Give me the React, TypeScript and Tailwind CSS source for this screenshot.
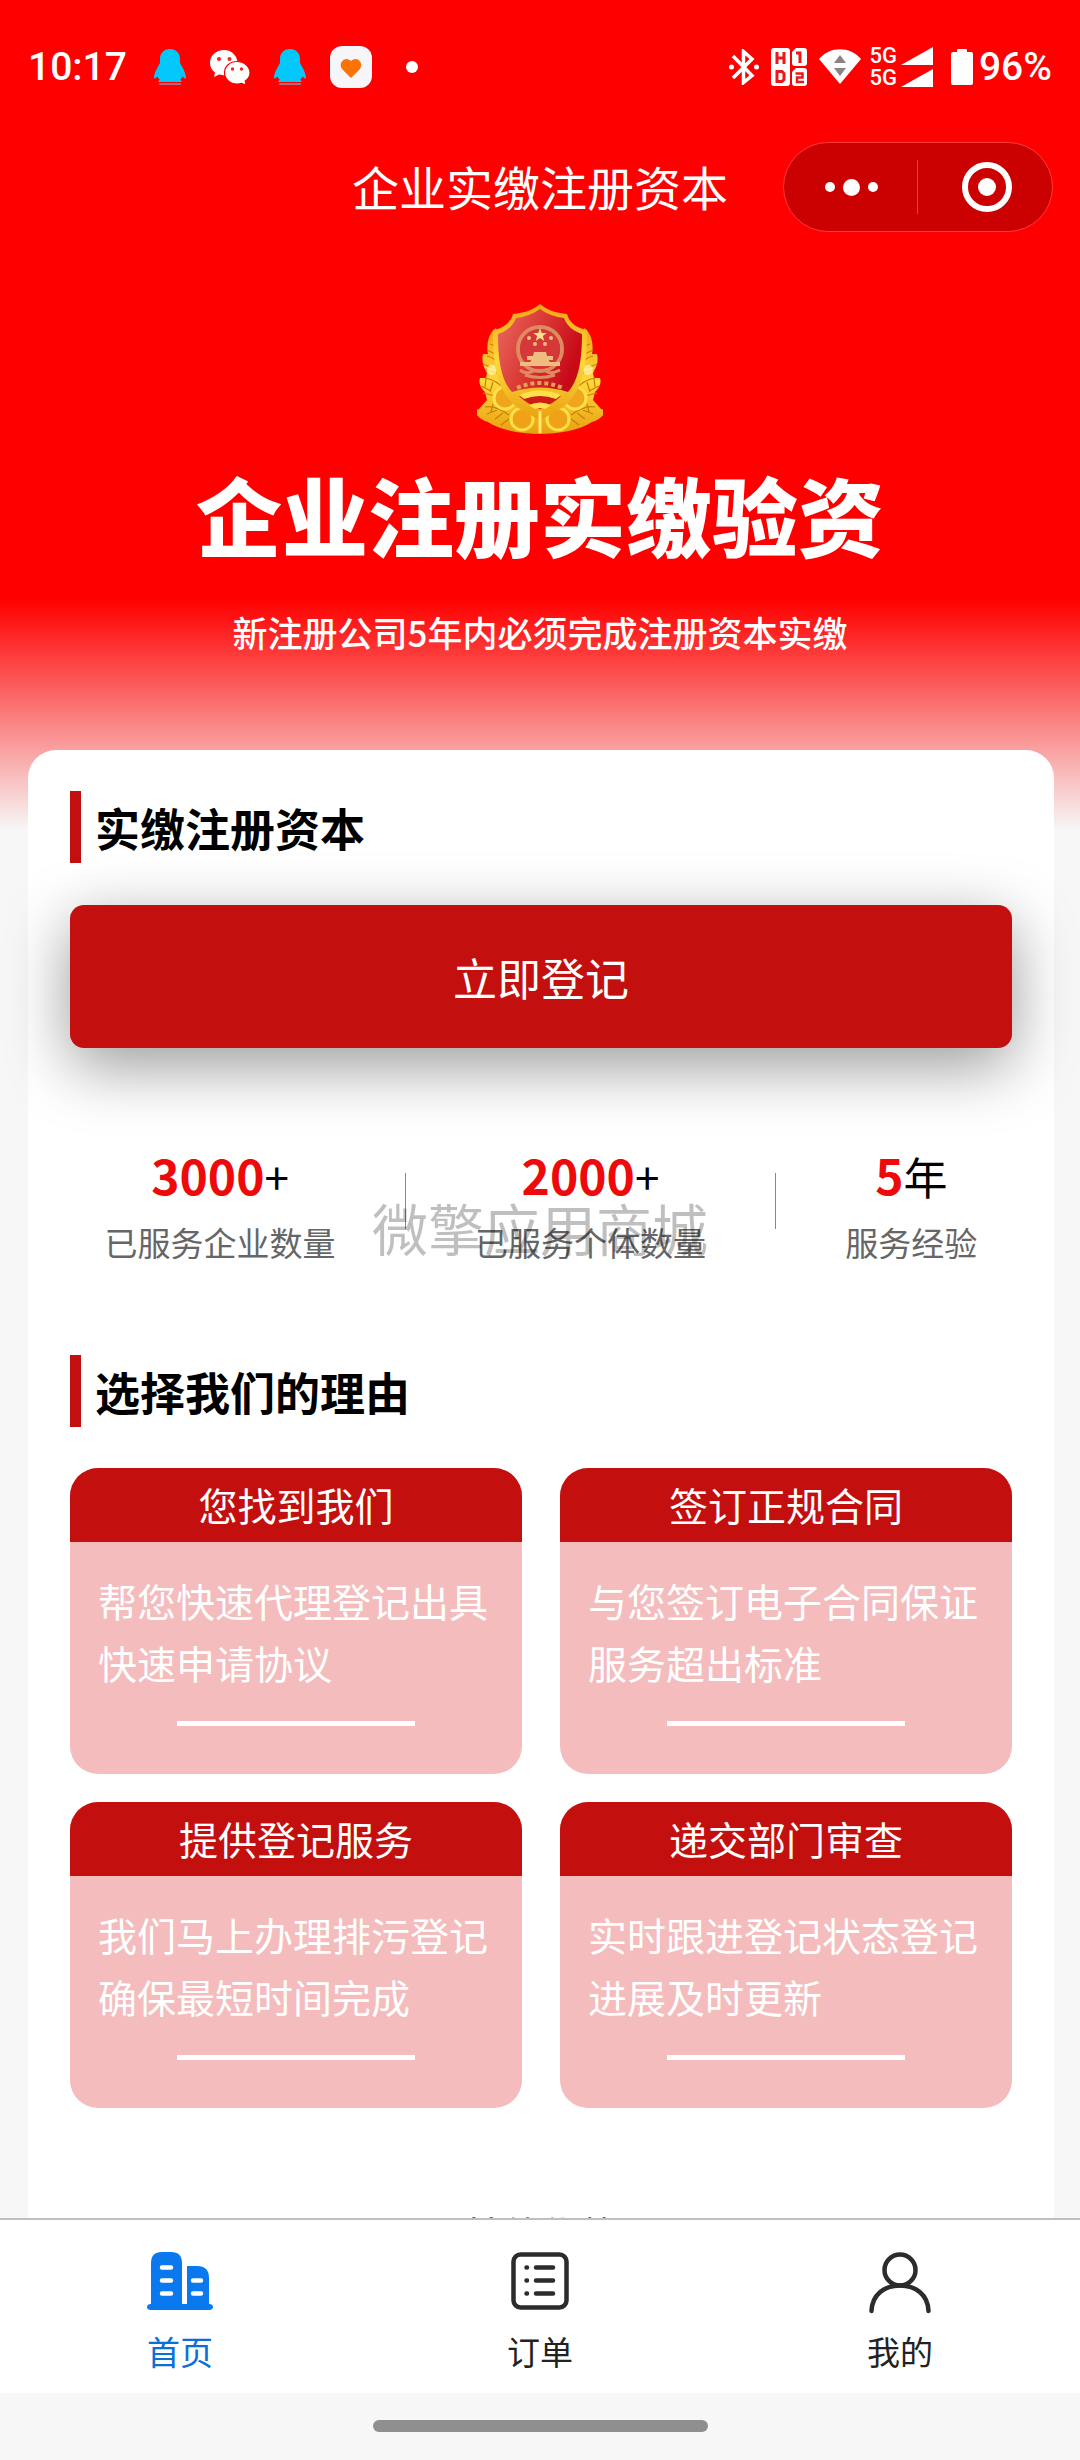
import type { ReactNode } from "react";

const stats = [
  { value: "3000", unit: "+", label: "已服务企业数量" },
  { value: "2000", unit: "+", label: "已服务个体数量" },
  { value: "5", unit: "年", label: "服务经验" },
];

const reasons = [
  { title: "您找到我们", lines: ["帮您快速代理登记出具", "快速申请协议"] },
  { title: "签订正规合同", lines: ["与您签订电子合同保证", "服务超出标准"] },
  { title: "提供登记服务", lines: ["我们马上办理排污登记", "确保最短时间完成"] },
  { title: "递交部门审查", lines: ["实时跟进登记状态登记", "进展及时更新"] },
];

function QQIcon() {
  return (
    <svg width="32" height="36" viewBox="0 0 32 36" fill="#04c8fb">
      <path d="M16 0C9.500 0 6 4.500 6 10v4C3 19 0 25 0 28.500c0 2 1.500 1 3.500-1C4 29 5 30 6 31c-1.500.5-2 1.300-2 2h24c0-.7-.5-1.500-2-2 1-1 2-2 2.500-3.500 2 2 3.500 3 3.500 1C32 25 29 19 26 14v-4C26 4.500 22.500 0 16 0z" />
      <path d="M5 34h22v2H5z" fill="#b06a80" />
    </svg>
  );
}

function WeChatIcon() {
  return (
    <svg width="40" height="34" viewBox="0 0 40 34">
      <path d="M14 0C6 0 0 5.500 0 13c0 4 2 7.500 5 9.500L4 27l5-2.500c2 .6 3.500.8 5 .8 8 0 13.500-5.500 13.500-12.300S22 0 14 0z" fill="#fff" />
      <circle cx="9" cy="9" r="2" fill="#f22" />
      <circle cx="19.500" cy="9" r="2" fill="#f22" />
      <path d="M27 11.500c-7.200 0-12.500 5-12.500 11.200S20 34 27 34c1.500 0 3-.2 4.500-.6L36 35l-.8-4c3-2 4.800-5 4.800-8.300 0-6.200-5.800-11.200-13-11.200z" fill="#fff" stroke="#f00" strokeWidth="1.200" />
      <circle cx="22.500" cy="19" r="1.700" fill="#f22" />
      <circle cx="31.500" cy="19" r="1.700" fill="#f22" />
    </svg>
  );
}

function HealthIcon() {
  return (
    <svg width="42" height="42" viewBox="0 0 42 42">
      <rect width="42" height="42" rx="12" fill="#f5f5fa" />
      <path d="M21 32 12.500 23.500C8.500 19 12 13 16.500 13c2 0 3.500 1 4.500 2.200C22 14 23.500 13 25.500 13c4.500 0 8 6 4 10.500z" fill="#fb7305" />
    </svg>
  );
}

function BluetoothIcon() {
  return (
    <svg width="30" height="36" viewBox="0 0 30 36" fill="none" stroke="#fff" strokeWidth="3.500">
      <path d="M4 7l19 19.500-8.500 7V2.500L23 10 4 29" />
      <circle cx="2.500" cy="18" r="2.500" fill="#fff" stroke="none" />
      <circle cx="27.500" cy="18" r="2.500" fill="#fff" stroke="none" />
    </svg>
  );
}

function SimIcon() {
  return (
    <svg width="36" height="38" viewBox="0 0 36 38" fill="#fff">
      <rect width="19" height="38" rx="3" />
      <path d="M25 0h8a3 3 0 0 1 3 3v12a3 3 0 0 1-3 3H24a3 3 0 0 1-3-3V4z" />
      <path d="M25 20h8a3 3 0 0 1 3 3v12a3 3 0 0 1-3 3H24a3 3 0 0 1-3-3V24z" />
      <g fill="none" stroke="#e8181c">
        <path d="M6 4v12M13 4v12M6 10h7" strokeWidth="3" />
        <path d="M6 23.500h5l2 2v6l-2 2H6z" strokeWidth="3" />
        <path d="M25 5h4v10" strokeWidth="3" />
        <path d="M24.500 25.500h7v4h-5.500v4.500h7" strokeWidth="2.500" />
      </g>
    </svg>
  );
}

function WifiIcon() {
  return (
    <svg width="42" height="36" viewBox="0 0 42 36">
      <path d="M0 10C11-3 31-3 42 10L21 35z" fill="#fff" />
      <path d="M15 14h12l-6-8zM15 19h12l-6 8z" fill="#8a8484" />
    </svg>
  );
}

function SignalRow() {
  return (
    <div className="flex items-center gap-1">
      <span className="text-[22px] leading-5">5G</span>
      <svg width="32" height="18" viewBox="0 0 32 18" fill="#fff">
        <path d="M0 18 32 0v18z" />
      </svg>
    </div>
  );
}

function BatteryIcon() {
  return (
    <svg width="22" height="36" viewBox="0 0 22 36" fill="#fff">
      <path d="M6 3V1q0-1 1-1h8q1 0 1 1v2h4q2 0 2 2v29q0 2-2 2H2q-2 0-2-2V5q0-2 2-2z" />
    </svg>
  );
}

function StatusBar() {
  return (
    <div className="flex h-[134px] items-center justify-between px-7 font-['Roboto',sans-serif] text-[39px] font-medium text-white">
      <div className="flex items-center">
        <span>10:17</span>
        <div className="ml-[27px] flex items-center gap-6">
          <QQIcon />
          <WeChatIcon />
          <QQIcon />
          <HealthIcon />
        </div>
        <span className="ml-[34px] h-3 w-3 rounded-full bg-white" />
      </div>
      <div className="flex items-center">
        <div className="flex items-center gap-3">
          <BluetoothIcon />
          <SimIcon />
          <WifiIcon />
        </div>
        <div className="ml-2 flex flex-col gap-[2px]">
          <SignalRow />
          <SignalRow />
        </div>
        <div className="ml-[18px] flex items-center gap-[6px]">
          <BatteryIcon />
          <span>96%</span>
        </div>
      </div>
    </div>
  );
}

function Capsule() {
  return (
    <div className="flex h-[90px] w-[270px] items-center rounded-full border border-[#ff3a3a] bg-[#cb0000] pl-[2px]">
      <button type="button" aria-label="更多" className="flex h-full flex-1 items-center justify-center gap-2">
        <span className="h-[10px] w-[10px] rounded-full bg-white" />
        <span className="h-[17px] w-[17px] rounded-full bg-white" />
        <span className="h-[10px] w-[10px] rounded-full bg-white" />
      </button>
      <span className="h-[54px] w-px bg-[#e63c3c]" />
      <button type="button" aria-label="关闭" className="flex h-full flex-1 items-center justify-center pl-1">
        <span className="flex h-[50px] w-[50px] items-center justify-center rounded-full border-[6px] border-white">
          <span className="h-[18px] w-[18px] rounded-full bg-white" />
        </span>
      </button>
    </div>
  );
}

function Emblem() {
  // One half of the wheat wreath, mirrored for the other side.
  const wreath = (
    <g>
      <path d="M17 24C10 28 7 40 9 50l-5 0c-2 8 1 14 4 19l-1 5-6 0c-2 6 2 11 5 14l2 8-8 9-5 1c2 6 8 10 14 12 12 8 32 12 54 12V96L24 70z" transform="translate(2 0)" fill="url(#gold)" />
      <g fill="none" stroke="#c8800a" strokeWidth="1.200">
        <path d="M10 52q9 2 13 10M8 74q12 2 20 12M8 103q10-2 24 8M13 40q7 2 9 9" />
        <path d="M4 82l10 5M6 89l12 3M10 110l10-4M18 115l8-6M24 121l8-6M6 60l10 4M9 66l11 3M10 46l8 4M16 78l-3 10M9 75l-1 8M16 100l-2 8" />
      </g>
      <circle cx="28" cy="94" r="11" fill="#f0a51c" stroke="#ffe04a" strokeWidth="3" />
      <circle cx="45" cy="115" r="11" fill="#efa118" stroke="#ffdf48" strokeWidth="3" />
      <circle cx="15" cy="66" r="5" fill="#fff3a8" opacity="0.8" />
    </g>
  );
  return (
    <svg width="126" height="130" viewBox="0 0 126 130" role="img" aria-label="徽章">
      <defs>
        <linearGradient id="gold" x1="0" y1="0" x2="0" y2="1">
          <stop offset="0" stopColor="#f2a51a" />
          <stop offset="0.5" stopColor="#ffd83a" />
          <stop offset="1" stopColor="#e8a010" />
        </linearGradient>
        <linearGradient id="shield" x1="0" y1="0" x2="1" y2="0.4">
          <stop offset="0" stopColor="#e86a60" />
          <stop offset="0.5" stopColor="#dc3a36" />
          <stop offset="1" stopColor="#c80a18" />
        </linearGradient>
      </defs>
      {wreath}
      <g transform="matrix(-1 0 0 1 126 0)">{wreath}</g>
      <path d="M63 0c7 6 16 9 27 10 2 8 9 14 20 16 0 36-4 58-20 74-8 7-18 10-27 17-9-7-19-10-27-17C20 84 16 62 16 26c11-2 18-8 20-16C47 9 56 6 63 0z" fill="url(#gold)" />
      <path d="M63 5c7 5 15 8 24 9 3 8 9 13 18 16 0 32-5 48-14 58-18-6-38-6-56 0C26 78 21 62 21 30c9-3 15-8 18-16 9-1 17-4 24-9z" fill="url(#shield)" />
      <path d="M42 92q21-9 42 0-8 8-21 13-13-5-21-13z" fill="#cf1c16" />
      <path d="M42 91q21-9 42 0l-5 4q-16-6-32 0zM52 101q11-5 22 0l-6 4q-5-2-10 0z" fill="#ffe14a" />
      <g transform="translate(0 3)">
        <g fill="none" stroke="#dc8c60" strokeWidth="4">
          <circle cx="63" cy="42" r="22" />
          <path d="M43 63q6 5 14 1t12 0 14-1M48 68q15 5 30 0" strokeWidth="3" />
        </g>
        <circle cx="63" cy="42" r="20" fill="#d6383a" />
        <path d="M63 21l1.800 5h5l-4 3 1.500 5-4.300-3-4.300 3 1.500-5-4-3h5z" fill="#ffe08a" />
        <g fill="#f0bd80">
          <circle cx="52" cy="31" r="2" />
          <circle cx="74" cy="31" r="2" />
          <circle cx="58" cy="37" r="2" />
          <circle cx="68" cy="37" r="2" />
          <path d="M57 45h12l1 4h6v4h-4l1 4H53l1-4h-4v-4h6zM43 55h40v4H43z" />
        </g>
      </g>
      <path d="M40 84q23-10 46 0" fill="none" stroke="#e6a052" strokeWidth="4" strokeDasharray="4 3" />
      <path d="M63 107v22" stroke="#ffe768" strokeWidth="3" />
    </svg>
  );
}

function SectionTitle({ children }: { children: ReactNode }) {
  return (
    <div className="flex h-[72px] items-center border-l-[11px] border-[#c40f0f] pl-[14px]">
      <h2 className="text-[45px] leading-none font-bold text-black">{children}</h2>
    </div>
  );
}

function HomeIcon() {
  return (
    <svg width="66" height="58" viewBox="0 0 66 58">
      <path d="M4 52V11Q4 0 15 0h9q11 0 11 11v41h5V14h10q12 0 12 12v26q4 0 4 3t-4 3H4q-4 0-4-3t4-3z" fill="#0a78ee" />
      <path d="M15 15.500h9M15 28.500h9M15 41.500h9M46 28.500h8M46 41.500h8" stroke="#fff" strokeWidth="4.500" strokeLinecap="round" />
    </svg>
  );
}

function OrderIcon() {
  return (
    <svg width="58" height="58" viewBox="0 0 58 58" fill="none" stroke="#2c2c2c" strokeWidth="4.500" strokeLinecap="round">
      <rect x="2.500" y="2.500" width="53" height="53" rx="7" />
      <path d="M25 15.500h17M25 28.500h17M25 41.500h17M15.500 15.500h.5M15.500 28.500h.5M15.500 41.500h.5" />
    </svg>
  );
}

function MineIcon() {
  return (
    <svg width="62" height="62" viewBox="0 0 62 62" fill="none" stroke="#2c2c2c" strokeWidth="4.500" strokeLinecap="round">
      <circle cx="31" cy="18" r="15.500" />
      <path d="M2.500 59C3 43 15 33.500 31 33.500S59 43 59.500 59" />
    </svg>
  );
}

const tabs = [
  { label: "首页", icon: <HomeIcon />, active: true },
  { label: "订单", icon: <OrderIcon />, active: false },
  { label: "我的", icon: <MineIcon />, active: false },
];

export default function App() {
  return (
    <div className="relative flex h-screen flex-col overflow-hidden bg-[#f7f7f7] font-['Noto_Sans_CJK_SC',sans-serif]">
      <div className="min-h-0 flex-1 overflow-hidden bg-[linear-gradient(#ff0000_600px,#f7f7f7_830px)]">
        <header>
          <StatusBar />
          <div className="grid grid-cols-[1fr_auto_1fr] items-center px-[27px] pt-2">
            <h1 className="col-start-2 pb-1 text-[47px] leading-none text-white">企业实缴注册资本</h1>
            <div className="flex justify-end">
              <Capsule />
            </div>
          </div>
        </header>

        <section className="flex flex-col items-center pt-[72px] text-white">
          <Emblem />
          <p className="mt-8 text-[86px] leading-[96px] font-black">企业注册实缴验资</p>
          <p className="mt-[46px] text-[35px] leading-[48px] font-medium">新注册公司5年内必须完成注册资本实缴</p>
        </section>

        <main className="mt-[94px] mr-[26px] ml-7 rounded-t-[28px] bg-white px-[42px] pt-[41px]">
          <SectionTitle>实缴注册资本</SectionTitle>
          <button
            type="button"
            className="mt-[42px] h-[143px] w-full rounded-[14px] bg-[#c40f0f] text-[44px] text-white shadow-[0_18px_64px_rgba(0,0,0,0.4)]"
          >
            立即登记
          </button>

          <div className="mt-[93px] flex items-start justify-around">
            {stats.map((stat, index) => (
              <div key={stat.label} className="contents">
                {index > 0 && <span className="mt-8 h-14 w-px bg-[#888]" />}
                <div className="text-center">
                  <p className="text-[44px] leading-[66px] text-black">
                    <span className="text-[48px] font-bold text-[#ee0a0a]">{stat.value}</span>
                    {stat.unit}
                  </p>
                  <p className="text-[33px] leading-[66px] text-[#666]">{stat.label}</p>
                </div>
              </div>
            ))}
          </div>

          <div className="mt-[80px]">
            <SectionTitle>选择我们的理由</SectionTitle>
          </div>

          <div className="mt-[41px] grid grid-cols-2 gap-x-[38px] gap-y-7">
            {reasons.map((reason) => (
              <article key={reason.title} className="overflow-hidden rounded-[28px] bg-[#f4bcbd] text-[39px] text-white">
                <h3 className="bg-[#c40f0f] pb-[2px] text-center leading-[72px]">{reason.title}</h3>
                <div className="px-7 pt-[27px] pb-12">
                  {reason.lines.map((line) => (
                    <p key={line} className="leading-[62px] whitespace-nowrap">{line}</p>
                  ))}
                  <div className="mx-auto mt-7 h-[5px] w-3/5 bg-white" />
                </div>
              </article>
            ))}
          </div>

          <p className="mt-[99px] text-center text-[39px] leading-[52px] text-[#666]">其他优势</p>
        </main>
      </div>

      <p className="pointer-events-none absolute inset-x-0 top-1/2 -mt-[45px] text-center text-[56px] leading-[84px] text-black/25">
        微擎应用商城
      </p>

      <nav className="relative grid h-[175px] grid-cols-3 border-t-2 border-[#bfbfbf] bg-white">
        {tabs.map((tab) => (
          <a
            key={tab.label}
            href="#"
            className={
              tab.active
                ? "flex flex-col items-center pt-8 text-[33px] text-[#0a70d8]"
                : "flex flex-col items-center pt-8 text-[33px] text-[#222]"
            }
          >
            <span className="h-[62px]">{tab.icon}</span>
            <span className="mt-[13px] leading-[48px]">{tab.label}</span>
          </a>
        ))}
      </nav>
      <div className="flex h-[67px] justify-center bg-[#f7f7f7] pt-[27px]">
        <span className="h-3 w-[335px] rounded-full bg-[#8f8f8f]" />
      </div>
    </div>
  );
}
